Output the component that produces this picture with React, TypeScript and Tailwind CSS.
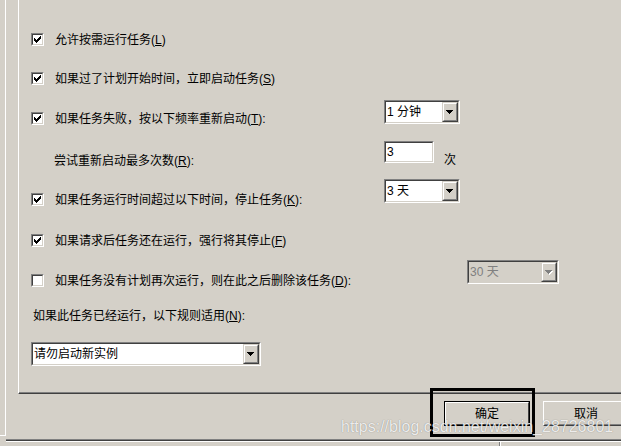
import type { ReactNode } from 'react'

const CHECK = ['......#', '.....##', '#...###', '##.###.', '#####..', '.###...', '..#....']

function Sunken({ className = '', fill = 'bg-white', children }: { className?: string; fill?: string; children?: ReactNode }) {
  return (
    <div className={`shrink-0 border border-t-[#808080] border-l-[#808080] border-b-white border-r-white ${className}`}>
      <div className={`w-full h-full flex border border-t-[#404040] border-l-[#404040] border-b-[#d4d0c8] border-r-[#d4d0c8] ${fill}`}>
        {children}
      </div>
    </div>
  )
}

function CheckBox({ checked }: { checked: boolean }) {
  return (
    <Sunken className="w-[13px] h-[13px]">
      {checked && (
        <svg width="9" height="9" viewBox="0 0 9 9" shapeRendering="crispEdges" className="block">
          {CHECK.flatMap((row, y) =>
            row.split('').map((c, x) =>
              c === '#' ? <rect key={`${x}-${y}`} x={x + 1} y={y + 1} width="1" height="1" fill="#000" /> : null,
            ),
          )}
        </svg>
      )}
    </Sunken>
  )
}

function ArrowButton({ disabled }: { disabled?: boolean }) {
  return (
    <div className="w-[16px] h-full shrink-0 border border-t-[#d4d0c8] border-l-[#d4d0c8] border-b-[#404040] border-r-[#404040]">
      <div className="w-full h-full flex items-center justify-center bg-[#d4d0c8] border border-t-white border-l-white border-b-[#808080] border-r-[#808080]">
        <svg width="8" height="5" viewBox="0 0 8 5" shapeRendering="crispEdges" className="block">
          {disabled && <polygon points="1,1 8,1 4.5,5" fill="#fff" />}
          <polygon points="0,0 7,0 3.5,4" fill={disabled ? '#808080' : '#000'} />
        </svg>
      </div>
    </div>
  )
}

function Combo({ value, className, disabled }: { value: string; className: string; disabled?: boolean }) {
  return (
    <Sunken className={`h-[24px] ${className}`} fill={disabled ? 'bg-[#d4d0c8] text-[#808080]' : 'bg-white text-black'}>
      <div className="flex-1 flex items-center pl-[1px] leading-none whitespace-nowrap overflow-hidden">{value}</div>
      <ArrowButton disabled={disabled} />
    </Sunken>
  )
}

function Key({ text, k, tail = '' }: { text: string; k: string; tail?: string }) {
  return (
    <span className="whitespace-nowrap leading-[13px]">
      {text}(<u className="underline-offset-1">{k}</u>){tail}
    </span>
  )
}

function CheckRow({ checked, children }: { checked: boolean; children: ReactNode }) {
  return (
    <div className="flex items-center h-full">
      <CheckBox checked={checked} />
      <div className="ml-[11px]">{children}</div>
    </div>
  )
}

function Button({ label, primary }: { label: string; primary?: boolean }) {
  return (
    <div className={`w-[86px] h-[25px] shrink-0 border ${primary ? 'border-black' : 'border-t-white border-l-white border-b-[#404040] border-r-[#404040]'}`}>
      <div className={`w-full h-full flex items-center justify-center border ${primary ? 'border-t-white border-l-white border-b-[#404040] border-r-[#404040]' : 'border-t-[#d4d0c8] border-l-[#d4d0c8] border-b-[#808080] border-r-[#808080]'}`}>
        {label}
      </div>
    </div>
  )
}

export default function App() {
  return (
    <div className="relative w-[621px] h-[446px] overflow-hidden flex bg-[#d4d0c8] text-black text-[12px] font-['Liberation_Sans','Noto_Sans_CJK_SC',sans-serif]">
      {/* left frame */}
      <div className="w-[6px] shrink-0 flex flex-col">
        <div className="h-[435px] border-r border-r-white" />
        <div className="h-px bg-white" />
      </div>

      <div className="flex-1 flex flex-col">
        <div className="pl-[12px]">
          <div className="h-[394px] border-l border-l-white border-b border-b-[#404040]">
            <div className="h-full border-b border-b-[#808080] pt-[33px] pl-[12px] flex flex-col">
              <div className="h-[13px] mb-[26px]">
                <CheckRow checked>
                  <Key text="允许按需运行任务" k="L" />
                </CheckRow>
              </div>

              <div className="h-[13px] mb-[27px]">
                <CheckRow checked>
                  <Key text="如果过了计划开始时间，立即启动任务" k="S" />
                </CheckRow>
              </div>

              <div className="h-[13px] mb-[29px] flex">
                <div className="w-[353px] shrink-0">
                  <CheckRow checked>
                    <Key text="如果任务失败，按以下频率重新启动" k="T" tail=":" />
                  </CheckRow>
                </div>
                <Combo value="1 分钟" className="w-[76px] self-start -mt-[12px]" />
              </div>

              <div className="h-[13px] mb-[26px] flex items-center">
                <div className="w-[353px] shrink-0 pl-[23px]">
                  <Key text="尝试重新启动最多次数" k="R" tail=":" />
                </div>
                <Sunken className="w-[50px] h-[22px] self-start -mt-[13px]">
                  <div className="flex items-center pl-[1px] leading-none">3</div>
                </Sunken>
                <span className="ml-[10px] leading-[13px]">次</span>
              </div>

              <div className="h-[13px] mb-[28px] flex">
                <div className="w-[353px] shrink-0">
                  <CheckRow checked>
                    <Key text="如果任务运行时间超过以下时间，停止任务" k="K" tail=":" />
                  </CheckRow>
                </div>
                <Combo value="3 天" className="w-[76px] self-start -mt-[14px]" />
              </div>

              <div className="h-[13px] mb-[27px]">
                <CheckRow checked>
                  <Key text="如果请求后任务还在运行，强行将其停止" k="F" />
                </CheckRow>
              </div>

              <div className="h-[13px] mb-[20px] flex">
                <div className="w-[436px] shrink-0">
                  <CheckRow checked={false}>
                    <Key text="如果任务没有计划再次运行，则在此之后删除该任务" k="D" tail=":" />
                  </CheckRow>
                </div>
                <Combo value="30 天" disabled className="w-[92px] self-start -mt-[14px]" />
              </div>

              <div className="h-[13px] mb-[22px] pl-[2px]">
                <Key text="如果此任务已经运行，以下规则适用" k="N" tail=":" />
              </div>

              <Combo value="请勿启动新实例" className="w-[230px]" />
            </div>
          </div>
        </div>

        <div className="h-[45px] pt-[7px] pl-[438px] flex gap-[13px]">
          <Button label="确定" primary />
          <Button label="取消" />
        </div>

        <div className="h-px bg-[#808080]" />
        <div className="h-px bg-[#404040]" />
        <div className="flex-1 flex border-t border-t-white">
          <div className="w-[494px] border-r border-r-[#808080]" />
          <div className="border-l border-l-white" />
        </div>
      </div>

      {/* hand-drawn highlight around the OK button */}
      <div className="absolute left-[430px] top-[388px] w-[105px] h-[49px] border-[3px] border-black" />

      {/* blog watermark */}
      <div className="absolute left-[341px] top-[419px] text-[16px] leading-none whitespace-nowrap font-['Liberation_Sans',sans-serif] text-white/85 [text-shadow:0_0_1px_rgba(0,0,0,0.45)]">
        https://blog.csdn.net/weixin_28726801
      </div>
    </div>
  )
}
